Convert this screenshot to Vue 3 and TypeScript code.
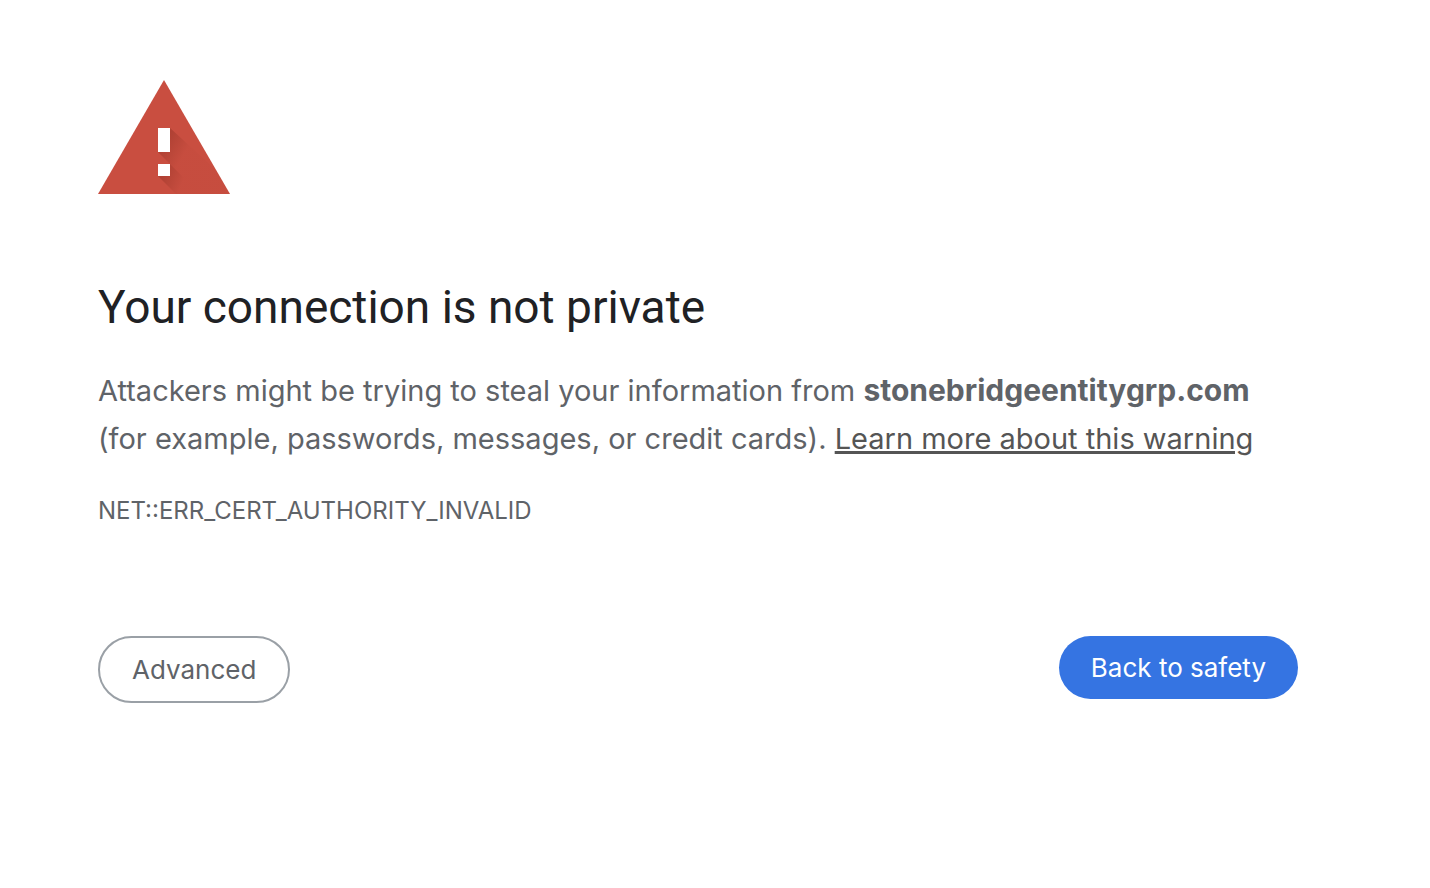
<script setup lang="ts">
const host = 'stonebridgeentitygrp.com'
const errorCode = 'NET::ERR_CERT_AUTHORITY_INVALID'
</script>

<template>
  <main class="page">
    <svg class="icon" viewBox="0 0 132 114" role="img" aria-label="Warning">
      <defs>
        <linearGradient id="bar-shade" gradientUnits="userSpaceOnUse" x1="67" y1="63" x2="86" y2="74">
          <stop offset="0" stop-color="#a0392c" stop-opacity="0.6" />
          <stop offset="1" stop-color="#a0392c" stop-opacity="0.06" />
        </linearGradient>
        <linearGradient id="dot-shade" gradientUnits="userSpaceOnUse" x1="65" y1="95" x2="84" y2="103">
          <stop offset="0" stop-color="#a0392c" stop-opacity="0.6" />
          <stop offset="1" stop-color="#a0392c" stop-opacity="0.06" />
        </linearGradient>
      </defs>
      <path d="M66 0L132 114H0Z" fill="#c94e40" />
      <path d="M72 48L118 90L132 114H102L72 84L60 72Z" fill="url(#bar-shade)" />
      <path d="M72 84L102 114H78L60 96Z" fill="url(#dot-shade)" />
      <path d="M60 48H72V72H60ZM60 84H72V96H60Z" fill="#fff" />
    </svg>
    <h1>Your connection is not private</h1>
    <p class="message">
      Attackers might be trying to steal your information from <strong>{{ host }}</strong>
      (for example, passwords, messages, or credit cards).
      <a href="#">Learn more about this warning</a>
    </p>
    <p class="code">{{ errorCode }}</p>
    <div class="actions">
      <button type="button" class="advanced">Advanced</button>
      <button type="button" class="safety">Back to safety</button>
    </div>
  </main>
</template>

<style>
body {
  margin: 0;
  background: #fff;
}
</style>

<style scoped>
.page {
  box-sizing: border-box;
  max-width: 1396px;
  padding: 80px 98px;
  font-family: Inter, sans-serif;
  color: #5f6368;
}
.icon {
  display: block;
  width: 132px;
  height: 114px;
}
h1 {
  margin: 84px 0 31px;
  font-family: Roboto, Inter, sans-serif;
  font-size: 46px;
  line-height: 58px;
  font-weight: 400;
  color: #202124;
}
.message {
  margin: 0;
  max-width: 1180px;
  font-size: 29px;
  line-height: 48px;
}
.message strong {
  font-size: 30px;
  line-height: 1;
}
.message a {
  color: #555;
  text-decoration-thickness: 3px;
}
.code {
  margin: 32px 0 0;
  font-size: 24px;
  line-height: 32px;
}
.actions {
  display: flex;
  justify-content: space-between;
  align-items: flex-start;
  margin-top: 109px;
}
button {
  font-family: inherit;
  font-size: 26px;
  line-height: 31px;
  padding: 16px 32px;
  border: 0;
  border-radius: 34px;
  cursor: pointer;
}
.advanced {
  border: 2px solid #9aa0a6;
  background: #fff;
  color: #5f6368;
}
.safety {
  background: #3574e2;
  color: #fff;
}
</style>
